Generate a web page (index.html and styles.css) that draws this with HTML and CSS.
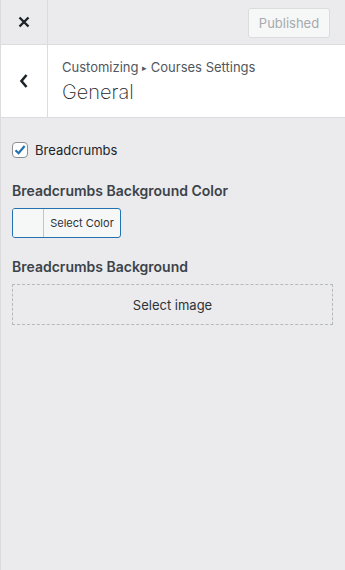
FILE: index.html
```html
<!DOCTYPE html>
<html>
<head>
<meta charset="utf-8">
<link rel="stylesheet" href="styles.css">
</head>
<body>
<div class="panel">
  <div class="topbar">
    <div class="close">
      <svg width="12" height="12" viewBox="0 0 12 12"><path d="M1.5 1.5 L10.5 10.5 M10.5 1.5 L1.5 10.5" stroke="#1d2327" stroke-width="2.4" stroke-linecap="butt"/></svg>
    </div>
    <div class="topbar-right">
      <button class="published">Published</button>
    </div>
  </div>
  <div class="header">
    <div class="back">
      <svg width="10" height="16" viewBox="0 0 10 16"><path d="M7.5 2 L2.5 8 L7.5 14" fill="none" stroke="#1d2327" stroke-width="2.6"/></svg>
    </div>
    <div class="title-wrap">
      <div class="crumb">Customizing <span class="tri">▸</span> Courses Settings</div>
      <div class="title">General</div>
    </div>
  </div>
  <div class="content">
    <label class="check-row">
      <span class="checkbox">
        <svg width="14" height="14" viewBox="0 0 14 14"><path d="M2.5 7.2 L5.6 10.2 L11.6 3" fill="none" stroke="#2271b1" stroke-width="2.2"/></svg>
      </span>
      <span class="check-label">Breadcrumbs</span>
    </label>
    <div class="control-title">Breadcrumbs Background Color</div>
    <button class="color-btn"><span class="swatch"></span><span class="color-text">Select Color</span></button>
    <div class="control-title second">Breadcrumbs Background</div>
    <button class="select-image">Select image</button>
  </div>
</div>
</body>
</html>
```
FILE: styles.css
```css
* { box-sizing: border-box; }
html, body { margin: 0; padding: 0; height: 100%; }
body {
  font-family: Inter, "Noto Sans", sans-serif;
  background: #ebebed;
  color: #1d2327;
}
.panel {
  min-height: 570px;
  border-left: 1px solid #dcdcde;
  display: flex;
  flex-direction: column;
}
.topbar {
  height: 45px;
  display: flex;
  border-bottom: 1px solid #dcdcde;
  background: #ebebed;
}
.close {
  width: 47px;
  border-right: 1px solid #dcdcde;
  display: flex;
  align-items: center;
  justify-content: center;
}
.topbar-right {
  flex: 1;
  display: flex;
  justify-content: flex-end;
  align-items: center;
  padding-right: 15px;
}
.published {
  font-family: Inter, "Noto Sans", sans-serif;
  font-size: 13px;
  color: #a7aaad;
  background: #f6f7f7;
  border: 1px solid #dcdcde;
  border-radius: 3px;
  height: 30px;
  width: 82px;
  padding: 0;
  margin-top: 1px;
}
.header {
  height: 73px;
  background: #fff;
  display: flex;
  border-bottom: 1px solid #dcdcde;
}
.back {
  width: 47px;
  border-right: 1px solid #dcdcde;
  display: flex;
  align-items: center;
  justify-content: center;
}
.title-wrap {
  padding: 13px 0 0 14px;
}
.crumb {
  font-size: 13px;
  color: #50575e;
  line-height: 18px;
}
.tri { font-size: 9px; position: relative; top: -1px; }
.title {
  font-size: 20px;
  font-weight: 200;
  color: #1d2327;
  line-height: 26px;
  margin-top: 1px;
}
.content {
  padding: 24px 12px 0 11px;
}
.check-row {
  display: flex;
  align-items: center;
  gap: 7px;
}
.checkbox {
  width: 16px;
  height: 16px;
  border: 1px solid #8c8f94;
  border-radius: 4px;
  background: #fff;
  display: flex;
  align-items: center;
  justify-content: center;
}
.check-label {
  font-size: 13px;
  color: #1d2327;
}
.control-title {
  font-size: 14px;
  font-weight: 600;
  color: #3c434a;
  margin-top: 23px;
  line-height: 20px;
}
.control-title.second { margin-top: 19px; }
.color-btn {
  margin-top: 7px;
  display: flex;
  height: 30px;
  width: 109px;
  padding: 0;
  border: 1px solid #2271b1;
  border-radius: 3px;
  background: #f6f7f7;
  overflow: hidden;
  font-family: Inter, "Noto Sans", sans-serif;
}
.swatch {
  width: 31px;
  height: 100%;
  border-right: 1px solid #c3c4c7;
  background: #f6f7f7;
}
.color-text {
  flex: 1;
  font-size: 11px;
  color: #2c3338;
  line-height: 28px;
  text-align: center;
}
.select-image {
  display: block;
  margin-top: 7px;
  width: 100%;
  height: 41px;
  border: 1px dashed #b4b9be;
  background: transparent;
  font-family: Inter, "Noto Sans", sans-serif;
  font-size: 13px;
  color: #2c3338;
  padding: 0;
}
```
